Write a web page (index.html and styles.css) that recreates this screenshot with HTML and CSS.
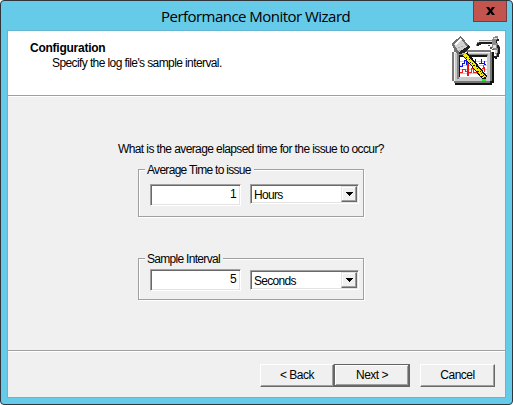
FILE: index.html
```html
<!DOCTYPE html>
<html lang="en">
<head>
<meta charset="utf-8">
<title>Performance Monitor Wizard</title>
<link rel="stylesheet" href="styles.css">
</head>
<body>
<div class="window">
  <div class="titlebar">
    <h1 class="title">Performance Monitor Wizard</h1>
    <button class="close" aria-label="Close"><svg width="9" height="8" viewBox="0 0 9 8"><path d="M0 0h3l1.500 2.300L6 0h3L6 4l3 4H6L4.500 5.700 3 8H0l3-4z"/></svg></button>
  </div>
  <div class="client">
    <header class="header">
      <div class="heading">
        <h2 class="name">Configuration</h2>
        <p class="desc">Specify the log file's sample interval.</p>
      </div>
      <svg class="logo" width="56" height="56" viewBox="0 0 56 56" shape-rendering="crispEdges">
        <path fill="#111" d="M6 18H46V49H44V51H7V49H6z"/>
        <path fill="#777" d="M4 18H6V16H43V18H44V47H42V49H6V47H4z"/>
        <path fill="#c9c9c9" d="M6 18H42V47H6z"/>
        <path fill="#f4f4f4" d="M6 18H42V19H7V47H6z"/>
        <path fill="#858585" d="M9 20H40V22H11V45H9z"/>
        <path fill="#161616" d="M11 21H39V23H12V43H11z"/>
        <path fill="#fff" d="M12 23H39V43H12z"/>
        <path fill="#ccc" d="M12 27H39V28H12zM12 31H39V32H12zM12 35H39V36H12zM12 39H39V40H12z"/>
        <path fill="none" stroke="#1111e0" d="M12 32.500H14.500V29.500H16.500V26.500H18V30.500M27.500 25V30M25 28.500H27M33.500 25V29.500H36.500V27M36 30.500H38M31 29.500H33"/>
        <path fill="none" stroke="#f02020" d="M12 38.500H14.500V35.500H17.500V37.500H19M21 38.500H23.500V34.500H25.500V38.500H28V36.500M34 34.500H36.500V38M35.500 31V34"/>
        <path fill="#ee1111" d="M19 25H21V42H19zM36 33H37V38H36z"/>
        <path fill="none" stroke="#111" stroke-width="6" d="M17 20L37 44"/>
        <path fill="none" stroke="#f6ea16" stroke-width="3.500" d="M16.500 20.500L36.500 43.500"/>
        <path fill="#111" d="M18 23h1v1h-1zM21 25h1v1h-1zM22 28h1v1h-1zM24 29h1v1h-1zM25 31h2v1h-2zM28 32h1v1h-1zM29 34h1v1h-1zM29 37h2v1h-2zM32 37h1v1h-1zM33 39h1v1h-1zM33 42h2v1h-2zM35 41h1v1h-1zM36 44h2v2h-2z"/>
        <path fill="#19ef30" d="M34 45H38V47H34z"/>
        <path fill="#6f6f6f" d="M13 2L22 13 11 20 9 20 4 11V9z"/>
        <path fill="#d2d2d2" d="M12.500 4L19 12.500 11 18 6 10.500z"/>
        <path fill="#fafafa" d="M12 4L14 6 8 11 6 10z"/>
        <path fill="#adadad" d="M13 12H15V13H13zM16 9H17V10H16zM10 13H12V14H10zM11 16H13V17H11z"/>
        <path fill="#222" d="M10 19L21 11 22 13 18 17 16 19 12 20z"/>
        <path fill="#8b8b8b" d="M28 10H29V8H31V6H44V5H45V3H47V2H50V6H49V9H50V12H52V20H50V23H48V20H47V16H45V14H42V12H44V10H31V12H28z"/>
        <path fill="#1d1d1d" d="M29 9H31V8H44V10H33V11H31V12H29zM49 5H51V7H49V9H48V6H49zM49 11H51V13H52V20H51V23H49V25H47V24H46V22H49V19H50V14H49z"/>
        <path fill="#dedede" d="M31 7H44V8H31zM46 4H49V5H46zM45 11H48V14H45zM42 12H44V13H42zM47 16H49V19H47z"/>
        <path fill="#555" d="M40 11H42V12H40zM42 13H44V15H42zM44 15H46V16H44z"/>
      </svg>
    </header>
    <main class="content">
      <p class="question">What is the average elapsed time for the issue to occur?</p>
      <section class="group average">
        <h3 class="legend"><span>Average Time to issue</span></h3>
        <div class="row">
          <div class="field">1</div>
          <div class="select"><span>Hours</span><i class="drop"><svg width="7" height="4" viewBox="0 0 7 4" shape-rendering="crispEdges"><path d="M0 0h7v1H6v1H5v1H4v1H3V3H2V2H1V1H0z"/></svg></i></div>
        </div>
      </section>
      <section class="group sample">
        <h3 class="legend"><span>Sample Interval</span></h3>
        <div class="row">
          <div class="field">5</div>
          <div class="select"><span>Seconds</span><i class="drop"><svg width="7" height="4" viewBox="0 0 7 4" shape-rendering="crispEdges"><path d="M0 0h7v1H6v1H5v1H4v1H3V3H2V2H1V1H0z"/></svg></i></div>
        </div>
      </section>
    </main>
    <footer class="footer">
      <button class="btn back">&lt; Back</button>
      <button class="btn next">Next &gt;</button>
      <button class="btn cancel">Cancel</button>
    </footer>
  </div>
</div>
</body>
</html>
```
FILE: styles.css
```css
* { box-sizing: border-box; }
body { margin: 0; width: 513px; height: 405px; overflow: hidden; background: #fff; color: #000; font: 12px/14px "Liberation Sans", sans-serif; letter-spacing: -0.6px; }
h1, h2, h3, p { margin: 0; font: inherit; white-space: nowrap; }
.window { width: 513px; height: 405px; border: 1px solid #30343b; border-radius: 4px; background: #66cae9; padding: 0 7px 7px; }
.titlebar { height: 30px; display: flex; justify-content: flex-end; align-items: flex-start; margin-right: -2px; }
.title { flex: 1; padding: 4px 0 0 153px; font: 15px/22px "Open Sans", sans-serif; letter-spacing: -0.53px; }
.close { width: 34px; height: 21px; padding: 0; border: 1px solid #733b42; border-top: 0; background: #c4544e; display: flex; align-items: center; justify-content: center; }
.client { width: 497px; height: 366px; background: #f0f0f0; display: flex; flex-direction: column; box-shadow: 0 0 0 1px #64b6d2; }
.header { height: 66px; background: #fff; border-bottom: 1px solid #fff; display: flex; justify-content: space-between; box-shadow: inset 0 -1px #a0a0a0; }
.heading { padding: 10px 0 0 22px; }
.name { font-weight: bold; letter-spacing: -0.25px; }
.desc { padding: 1px 0 0 22px; }
.logo { margin: 3px 1px 0 0; }
.content { flex: 1; padding: 45px 0 0 130px; }
.question { margin-left: -20px; }
.group { width: 226px; border: 1px solid #a0a0a0; box-shadow: 1px 1px #fff, inset 1px 1px #fff; }
.average { height: 48px; margin-top: 13px; }
.sample { height: 42px; margin-top: 41px; }
.legend { height: 14px; margin: -7px 0 0 6px; letter-spacing: -0.7px; }
.legend span { display: inline-block; background: #f0f0f0; padding: 0 3px 0 2px; }
.row { display: flex; gap: 9px; padding: 7px 0 0 11px; align-items: flex-start; }
.sample .row { padding-top: 3px; }
.sample .select { margin-top: 1px; }
.field, .select { background: #fff; border: 1px solid; border-color: #a0a0a0 #fff #fff #a0a0a0; box-shadow: inset 1px 1px #696969, inset -1px -1px #e3e3e3; }
.field { width: 91px; height: 22px; padding: 2px 4px 0 0; text-align: right; }
.select { width: 109px; height: 20px; padding: 1px; display: flex; justify-content: space-between; letter-spacing: -0.7px; }
.select span { padding: 2px 0 0 2px; }
.drop { width: 16px; height: 16px; background: #f0f0f0; display: flex; align-items: center; justify-content: center; border: 1px solid; border-color: #e3e3e3 #696969 #696969 #e3e3e3; box-shadow: inset -1px -1px #a0a0a0, inset 1px 1px #fff; }
.footer { height: 47px; border-top: 1px solid #a0a0a0; box-shadow: inset 0 1px #fff; display: flex; justify-content: flex-end; padding: 13px 10px 0 0; }
.btn { height: 23px; width: 75px; padding: 0 0 1px; font: inherit; letter-spacing: -0.5px; color: #000; background: #f0f0f0; border: 1px solid; border-color: #fff #696969 #696969 #fff; box-shadow: inset -1px -1px #a0a0a0; }
.back { width: 74px; }
.next { width: 76px; border: 1px solid #646464; box-shadow: inset -1px -1px #696969, inset 1px 1px #fff, inset -2px -2px #a0a0a0; }
.cancel { margin-left: 10px; }
```
